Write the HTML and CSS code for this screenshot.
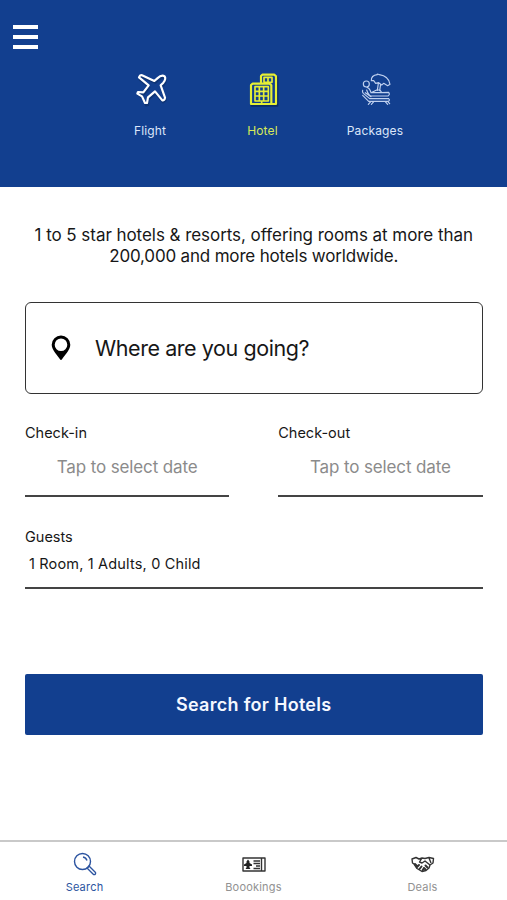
FILE: index.html
```html
<!DOCTYPE html>
<html lang="en">
<head>
<meta charset="utf-8">
<title>Hotels</title>
<link rel="stylesheet" href="styles.css">
</head>
<body>
<div class="app">
  <header class="header">
    <button class="menu" aria-label="Menu"><i></i><i></i><i></i></button>
    <nav class="modes">
      <a class="mode">
        <svg class="mode-icon" width="31" height="31" viewBox="48 42 93 93">
          <path class="shade" d="M136 55Q126 50 114 61L106 68 68 52 59 59 88 82 72 103 54 103 68 115 78 136 84 135 86 118 107 101 129 127 137 121 124 82 132 74Q140 63 136 55Z"/>
          <path d="M134 49Q125 43 112 55L103 63 66 46Q60 44 57 52L86 76 70 97 54 96 52 101 66 109 75 129 81 129 84 112 105 94 127 121Q134 122 135 113L122 76 130 68Q139 57 134 49Z"/>
        </svg>
        <span>Flight</span>
      </a>
      <a class="mode active">
        <svg class="mode-icon" width="28" height="31" viewBox="60 42 84 93">
          <path class="shade" d="M65 137H142V52"/>
          <path d="M93 70V48L97 44H133L138 49V132H63V75L68 71H119L124 76V132"/>
          <path class="thin" d="M102 52H126V67H102ZM114 52V67M75 80H115V123H75ZM88 80V123M101 80V123M75 94H115M75 108H115M95 124V132"/>
        </svg>
        <span>Hotel</span>
      </a>
      <a class="mode">
        <svg class="mode-icon fine" width="28" height="31" viewBox="80 42 84 93">
          <circle cx="93" cy="72" r="9"/>
          <path d="M108 62Q107 46 126 44 124 40 132 44 160 48 164 73L157 77 145 70 139 75 130 68 121 70 115 62ZM129 70 126 91M136 72 133 92M95 82Q103 84 107 98L124 90H134L139 98 160 97Q165 103 158 108H106Q99 105 94 90M107 98 137 98M82 91Q80 96 84 100L103 116H160Q165 120 159 124H100L82 106M90 98 107 110M107 124 99 133M116 124 108 133M149 124 157 133M157 124 163 131"/>
        </svg>
        <span>Packages</span>
      </a>
    </nav>
  </header>
  <main class="content">
    <p class="intro">1 to 5 star hotels &amp; resorts, offering rooms at more than<br><span>200,000 and more hotels worldwide.</span></p>
    <div class="destination">
      <svg width="20" height="26" viewBox="0 0 20 26"><path fill-rule="evenodd" d="M10 .5A9.2 9.2 0 0 0 .7 9.700C.7 15 7 21 8.800 24Q10 25.800 11.200 24C13 21 19.300 15 19.300 9.700A9.200 9.200 0 0 0 10 .5ZM10 3.500A6.300 6.300 0 1 1 10 16.100A6.300 6.300 0 0 1 10 3.500Z"/></svg>
      <span>Where are you going?</span>
    </div>
    <div class="dates">
      <div class="field"><label>Check-in</label><div class="date">Tap to select date</div></div>
      <div class="field"><label>Check-out</label><div class="date">Tap to select date</div></div>
    </div>
    <div class="guests"><label>Guests</label><div class="count">1 Room, 1 Adults, 0 Child</div></div>
    <button class="submit"><span>Search for Hotels</span></button>
  </main>
  <nav class="tabs">
    <a class="tab active">
      <svg width="24" height="24" viewBox="0 0 24 24"><circle cx="9.500" cy="9.500" r="8"/><path d="M10 5Q13 5.500 14 8.500M14 16 16 14 22.500 20.500Q23 23 20.500 22.500Z"/></svg>
      <span>Search</span>
    </a>
    <a class="tab">
      <svg width="24" height="24" viewBox="0 0 24 24"><path d="M1 6H23V19H1ZM19.500 6V19M11.500 9H18M11.500 11.500H18M14 14H18M11.500 16.500H18"/><path class="solid" d="M6 7.500 7.500 9.500V11L10 12.500V14H7.500V15.500L8.500 17H3.500L4.500 15.500V14H2V12.500L4.500 11V9.500Z"/></svg>
      <span>Boookings</span>
    </a>
    <a class="tab">
      <svg width="24" height="24" viewBox="0 0 24 24"><path d="M1 7 5 5.500 8 7 11 6 14 6.500 18 5.500 22.500 6.500 22 11 19 13 18 16 15 18.500 11 19.500 6 16.500 3 12 1.500 11ZM11 6 8.500 10 11 11 14 9 19 13M18 6 20 11"/><path class="heavy" d="M4 12 5.500 13.500M6 15 8 13M8.500 17 10.500 14.500M11.500 18.500 13 16M14.500 17.500 13 16M16.500 15.500 14.500 13.500"/></svg>
      <span>Deals</span>
    </a>
  </nav>
</div>
</body>
</html>
```
FILE: styles.css
```css
* { box-sizing: border-box; }
body { margin: 0; font-family: Inter, "Liberation Sans", sans-serif; color: #171717; background: #fff; }
button { font: inherit; border: 0; padding: 0; }
.app { height: 900px; display: flex; flex-direction: column; }
.header { height: 187px; background: #123f8f; padding: 25px 0 0; flex: none; }
.menu { display: flex; flex-direction: column; gap: 6px; width: 25px; margin-left: 13px; background: none; }
.menu i { height: 4px; background: #fff; }
.modes { display: flex; justify-content: center; margin-top: 25px; padding-left: 18px; }
.mode { width: 112.5px; display: flex; flex-direction: column; align-items: center; color: #dce6fa; font-size: 12px; line-height: 16px; letter-spacing: .15px; }
.mode span { margin-top: 18px; }
.mode-icon { fill: none; stroke: #fff; stroke-width: 6.5; stroke-linejoin: round; stroke-linecap: round; overflow: visible; position: relative; left: 1px; }
.mode-icon .shade { stroke: #0e3475; }
.mode-icon.fine { stroke: #bfd0ef; stroke-width: 3.5; }
.mode.active { color: #d7e957; }
.mode.active .mode-icon { stroke: #e5ef35; }
.mode.active .shade { stroke: #0b2c65; }
.mode-icon .thin { stroke-width: 5; }
.content { flex: 1; padding: 38px 24.5px 0 25px; }
.intro { margin: 0; text-align: center; font-size: 17px; line-height: 21px; letter-spacing: -.05px; white-space: nowrap; }
.intro span { letter-spacing: -.18px; }
.destination { height: 92px; margin-top: 35px; border: 1.5px solid #333; border-radius: 6px; display: flex; align-items: center; padding-left: 25px; gap: 24px; font-size: 21.5px; letter-spacing: -.43px; }
.dates { display: flex; gap: 49px; margin-top: 29px; }
.field { flex: 1; height: 74px; border-bottom: 2px solid #444; }
label { display: block; font-size: 14.5px; line-height: 20px; }
.date { margin-top: 13px; font-size: 17px; line-height: 22px; letter-spacing: -.12px; text-align: center; color: #8b8b8b; }
.guests { margin-top: 30px; height: 62px; border-bottom: 2px solid #444; }
.count { margin: 7px 0 0 4px; font-size: 14.5px; line-height: 20px; letter-spacing: .17px; }
.submit { display: block; width: 100%; height: 61px; margin-top: 85px; border-radius: 2px; background: #123f8f; color: #f5f8ff; font-size: 18px; font-weight: 600; letter-spacing: .28px; }
.tabs { height: 60px; flex: none; border-top: 2px solid #c9c9c9; display: flex; padding-top: 10px; }
.tab { flex: 1; display: flex; flex-direction: column; align-items: center; color: #929292; font-size: 11px; line-height: 14px; letter-spacing: .2px; }
.tab span { margin-top: 4px; }
.tab svg { fill: none; stroke: #333; stroke-width: 1.4; stroke-linejoin: round; }
.tab .heavy { stroke-width: 2; stroke-linecap: round; }
.tab .solid { fill: #222; stroke: none; }
.tab.active { color: #2c54a0; }
.tab.active svg { stroke: #2c54a0; }
```
